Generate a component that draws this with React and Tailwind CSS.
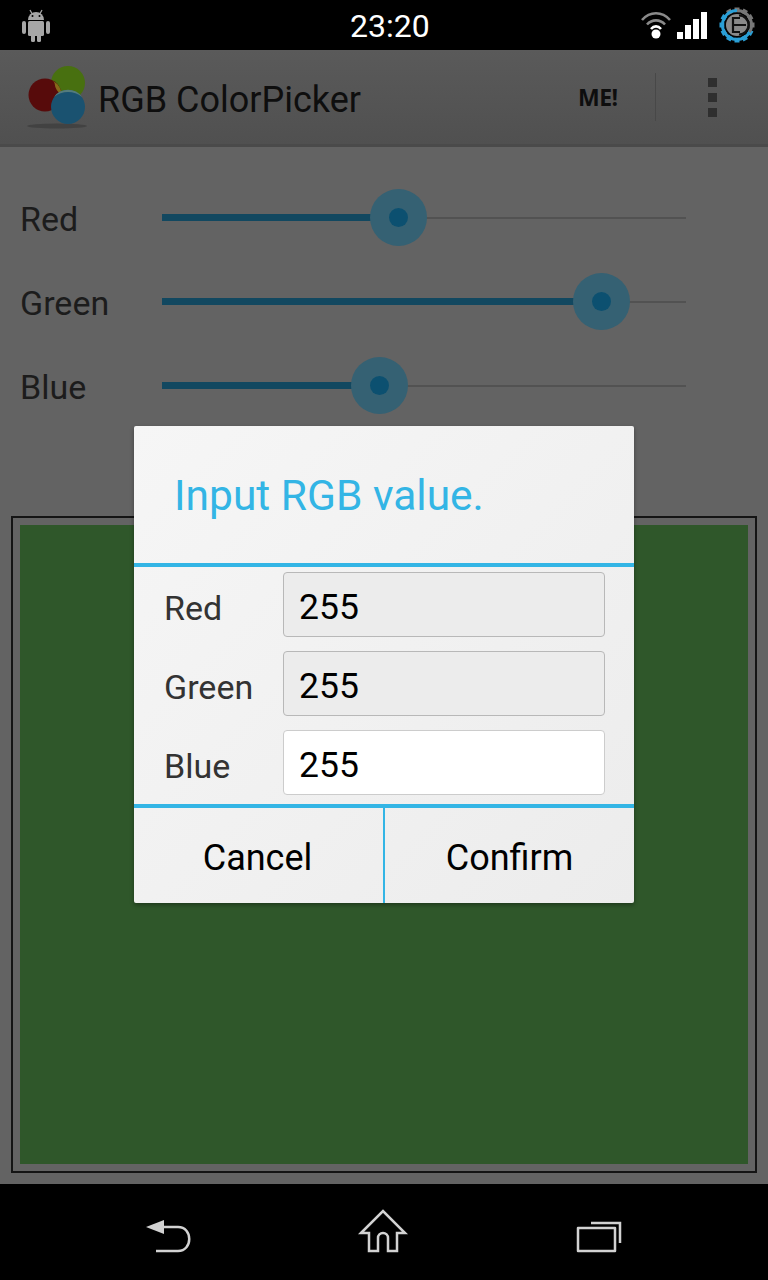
const font = "font-['Roboto',sans-serif]";

function AndroidIcon() {
  return (
    <svg width="30" height="33" viewBox="0 0 30 33" fill="#a6a6a6">
      <path d="M7 11a8 8 0 0 1 16 0z" />
      <path d="M9 1l2.500 4.500M21 1l-2.500 4.500" stroke="#a6a6a6" strokeWidth="1.300" />
      <rect x="7" y="12" width="16" height="15" rx="1.500" />
      <rect x="1" y="12" width="4" height="13" rx="2" />
      <rect x="25" y="12" width="4" height="13" rx="2" />
      <rect x="10" y="25" width="4" height="8" rx="1.500" />
      <rect x="16" y="25" width="4" height="8" rx="1.500" />
      <circle cx="11.500" cy="7" r="1" fill="#000" />
      <circle cx="18.500" cy="7" r="1" fill="#000" />
    </svg>
  );
}

function WifiIcon() {
  return (
    <svg width="30" height="28" viewBox="0 0 30 28" fill="none">
      <path d="M1 9C9 0 21 0 29 9" stroke="#8a8a8a" strokeWidth="2.600" />
      <path d="M6 13.500C11 8 19 8 24 13.500" stroke="#8a8a8a" strokeWidth="2.600" />
      <path d="M10 18C13 14.500 17 14.500 20 18" stroke="#fff" strokeWidth="2.600" />
      <circle cx="15" cy="23" r="4.500" fill="#fff" />
    </svg>
  );
}

function SignalIcon() {
  return (
    <svg width="30" height="27" viewBox="0 0 30 27" fill="#fff">
      <rect x="0" y="20" width="6" height="7" />
      <rect x="8" y="13" width="6" height="14" />
      <rect x="16" y="7" width="6" height="20" />
      <rect x="24" y="0" width="6" height="27" />
    </svg>
  );
}

function GearBattery() {
  const teeth = Array.from({ length: 12 }, (_, i) => i * 30);
  return (
    <svg width="36" height="36" viewBox="0 0 36 36" fill="none">
      {teeth.map((a) => (
        <rect
          key={a}
          x="15.500"
          y="0.500"
          width="5"
          height="5"
          fill={a >= 120 && a <= 300 ? '#2a9fd6' : '#777'}
          transform={`rotate(${a} 18 18)`}
        />
      ))}
      <path d="M18 3.500a14.500 14.500 0 0 1 12.500 21.800" stroke="#777" strokeWidth="3" />
      <path d="M30.500 25.300A14.500 14.500 0 1 1 18 3.500" stroke="#2a9fd6" strokeWidth="3" />
      <circle cx="18" cy="18" r="12.500" fill="#050505" />
      <circle cx="18" cy="18" r="11" fill="#8a8a8a" />
      <path d="M20 8.500a9.500 9.500 0 0 1 0 19" stroke="#111" strokeWidth="2.200" />
      <path d="M21 11h-7v14h7M14 18h13" stroke="#111" strokeWidth="2.200" />
    </svg>
  );
}

function Logo() {
  return (
    <svg width="64" height="66" viewBox="0 0 64 66">
      <ellipse cx="32" cy="62" rx="30" ry="2.500" fill="#3f3f3f" opacity="0.8" />
      <circle cx="43" cy="19" r="17" fill="#487010" />
      <circle cx="20" cy="31" r="16.500" fill="#570b0b" />
      <path d="M28 17a16.500 16.500 0 0 1 8.500 14a17 17 0 0 1-7-12z" fill="#86691a" />
      <circle cx="43" cy="43" r="17" fill="#1a5270" />
      <path d="M29 33a17 17 0 0 1 28 0a22 22 0 0 0-28 0z" fill="#557c7c" />
    </svg>
  );
}

function Slider({ label, percent }) {
  return (
    <div className="flex h-[84px] items-center">
      <span className="mt-[2px] w-[162px] pl-[20px] text-[34px] leading-none text-[#1c1c1c]">{label}</span>
      <div className="relative h-[2px] w-[524px] bg-[#525252]">
        <div className="absolute -top-[3px] left-0 h-[7px] bg-[#124860]" style={{ width: `${percent}%` }} />
        <div
          className="absolute -top-[28px] -ml-[28px] flex h-[57px] w-[57px] items-center justify-center rounded-full bg-[#356173]"
          style={{ left: `${percent}%` }}
        >
          <div className="h-[19px] w-[19px] rounded-full bg-[#0c5070]" />
        </div>
      </div>
    </div>
  );
}

function DialogRow({ label, active }) {
  return (
    <div className="flex h-[65px] items-center pl-[30px]">
      <span className="mt-[6px] w-[119px] text-[34px] leading-none text-[#333333]">{label}</span>
      <div
        className={`flex h-[65px] w-[322px] items-center rounded-[4px] border pl-[15px] pt-[7px] text-[35.500px] leading-none text-black ${
          active ? 'border-[#cccccc] bg-white' : 'border-[#b8b8b8] bg-[#ececec]'
        }`}
      >
        255
      </div>
    </div>
  );
}

export default function App() {
  return (
    <div className={`relative flex h-[1280px] w-[768px] flex-col overflow-hidden bg-[#636363] ${font}`}>
      {/* Status bar */}
      <div className="relative flex h-[50px] shrink-0 items-center justify-between bg-black pl-[21px] pr-[13px]">
        <AndroidIcon />
        <span className="absolute left-[350px] top-[8px] text-[32px] leading-[36px] text-white">23:20</span>
        <div className="flex items-center">
          <WifiIcon />
          <div className="ml-[6px] mt-[1px]"><SignalIcon /></div>
          <div className="ml-[12px]"><GearBattery /></div>
        </div>
      </div>

      {/* Action bar */}
      <div className="flex h-[97px] shrink-0 items-center border-b-[3px] border-[#4a4a4a] bg-[linear-gradient(#5a5a5a,#505050)] pl-[25px]">
        <Logo />
        <span className="ml-[9px] mt-[5px] w-[262px] whitespace-nowrap text-[36px] leading-none text-[#0e0e0e]">RGB ColorPicker</span>
        <span className="ml-[218px] w-[40px] whitespace-nowrap font-['Open_Sans',sans-serif] text-[23px] font-bold leading-none tracking-[-0.5px] text-[#0e0e0e]">ME!</span>
        <div className="ml-[37px] h-[48px] w-px bg-[#484848]" />
        <div className="ml-[52px] flex flex-col gap-[6px]">
          <div className="h-[9px] w-[9px] bg-[#2f2f2f]" />
          <div className="h-[9px] w-[9px] bg-[#2f2f2f]" />
          <div className="h-[9px] w-[9px] bg-[#2f2f2f]" />
        </div>
      </div>

      {/* Sliders */}
      <div className="flex shrink-0 flex-col pt-[29px]">
        <Slider label="Red" percent={45} />
        <Slider label="Green" percent={83.800} />
        <Slider label="Blue" percent={41.400} />
      </div>

      {/* Colour preview */}
      <div className="mx-[11px] mt-[88px] h-[657px] border-2 border-[#141414] p-[7px]">
        <div className="h-full bg-[#2f572a]" />
      </div>

      {/* Navigation bar */}
      <div className="mt-[11px] flex h-[96px] shrink-0 bg-black">
        <svg width="768" height="96" viewBox="0 0 768 96" fill="none" stroke="#d2d2d2" strokeWidth="2.500">
          <path d="M146 43L164 36V50z" fill="#d2d2d2" stroke="none" />
          <path d="M162 43h16c15 0 15 24 0 24h-22" />
          <path d="M361 49L383 27L405 49h-8v18h-9V54a5 5 0 0 0-10 0v13h-9V49z" strokeLinejoin="miter" />
          <path d="M578 44h37v23h-37z" strokeLinejoin="round" />
          <path d="M591 39h29v20" />
        </svg>
      </div>

      {/* Dialog */}
      <div className="absolute left-[134px] top-[426px] flex h-[477px] w-[500px] flex-col rounded-[2px] bg-[linear-gradient(135deg,#f6f6f6,#ececec)] shadow-[0_2px_4px_rgba(0,0,0,0.35)]">
        <div className="flex h-[141px] shrink-0 items-center border-b-[4px] border-[#33b5e5] pl-[40px]">
          <span className="mt-[3px] whitespace-nowrap text-[42.500px] leading-none text-[#33b5e5]">Input RGB value.</span>
        </div>
        <div className="flex h-[237px] shrink-0 flex-col gap-[14px] pt-[5px]">
          <DialogRow label="Red" />
          <DialogRow label="Green" />
          <DialogRow label="Blue" active />
        </div>
        <div className="flex flex-1 border-t-[4px] border-[#33b5e5] text-[36px] leading-none text-black">
          <div className="flex w-[251px] items-center justify-center border-r-2 border-[#33b5e5] pr-[2px] pt-[4px]">Cancel</div>
          <div className="flex flex-1 items-center justify-center pt-[4px]">Confirm</div>
        </div>
      </div>
    </div>
  );
}
